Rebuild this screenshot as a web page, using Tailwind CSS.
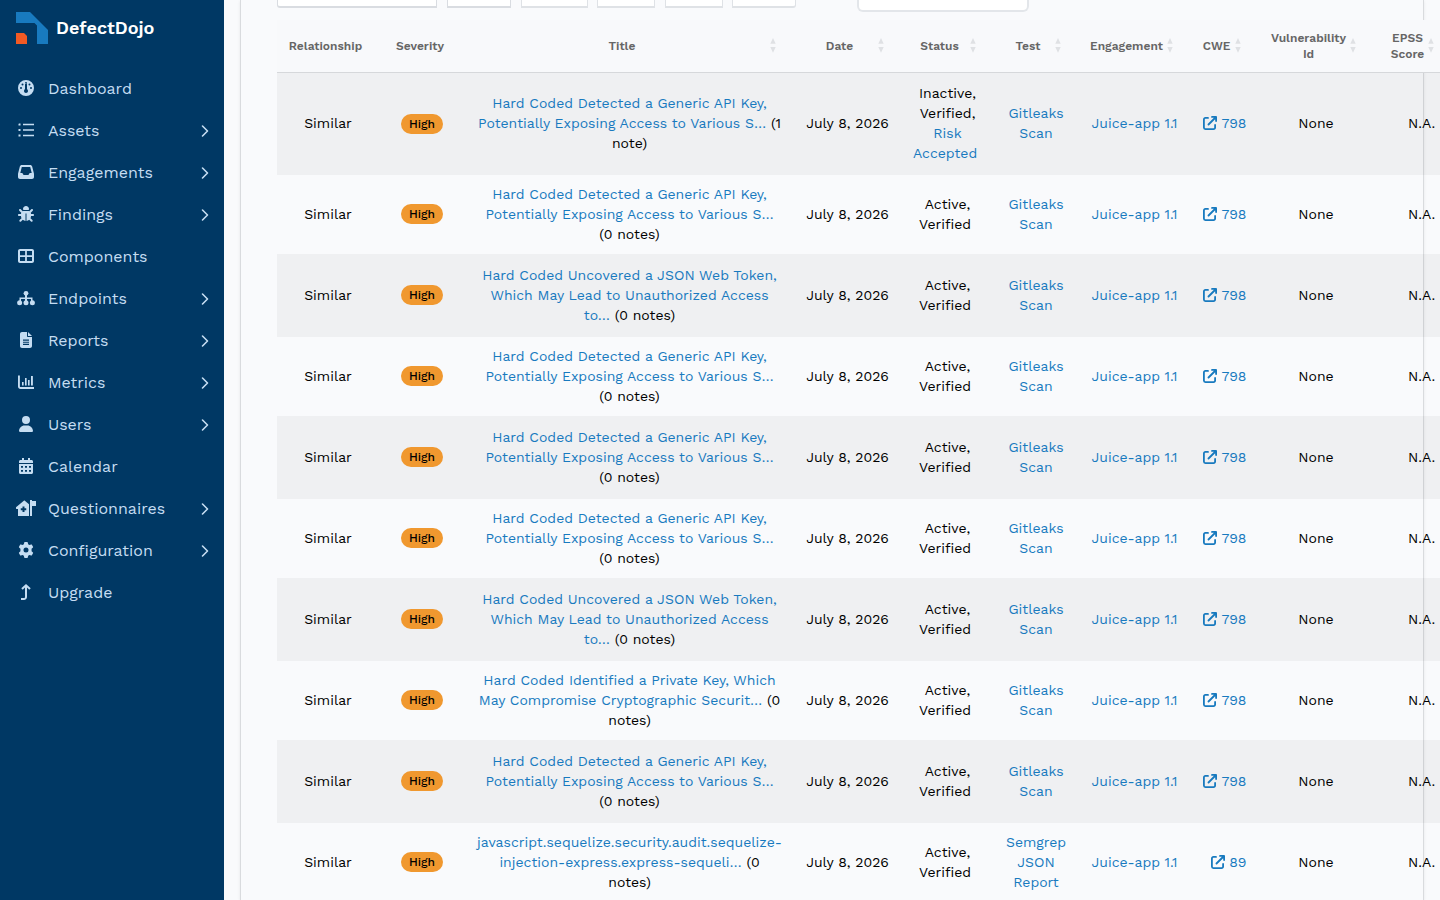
<!DOCTYPE html>
<html lang="en">
<head>
    <meta charset="UTF-8">
    <meta name="viewport" content="width=device-width, initial-scale=1.0">
    <title>DefectDojo</title>
    <script src="https://cdn.jsdelivr.net/npm/@tailwindcss/browser@4"></script>
</head>
<body class="bg-[#f9fafc] h-screen overflow-hidden flex font-['Work_Sans','Inter',sans-serif]">

    <!-- Sidebar -->
    <aside class="w-56 shrink-0 h-full bg-[#003864]">
        <div class="h-[67px] pl-4 pt-3 flex gap-2">
            <svg class="w-8 h-8" viewBox="0 0 32 32">
                <path fill="#187abf" d="M0 0h14l18 18v14H21V13.500L18.500 11H0z"/>
                <path fill="#f15a24" d="M0 21h8l3 3v8H0z"/>
            </svg>
            <span class="text-white text-[18px] font-semibold leading-8">DefectDojo</span>
        </div>
        <nav id="menu"></nav>
    </aside>

    <!-- Content -->
    <main class="flex-1 min-w-0 pl-4 pr-4">
        <div class="h-full border-x border-[#d9dbde] shadow-[0_1px_3px_rgba(0,0,0,0.08)] pl-9 flex flex-col">
            <div class="h-5 shrink-0 flex items-start">
                <div class="w-40 h-2 rounded-bl-[3px] bg-white border-x border-b-2 border-[#d9dce1]"></div>
                <div class="ml-2.5 w-16 h-2 bg-white border-x border-b-2 border-[#d9dce1]"></div>
                <div class="ml-2.5 w-[67px] h-2 bg-white border-x border-b-2 border-[#dfe2e6]"></div>
                <div class="ml-[9px] w-[58px] h-2 bg-white border-x border-b-2 border-[#dfe2e6]"></div>
                <div class="ml-2.5 w-[58px] h-2 bg-white border-x border-b-2 border-[#dfe2e6]"></div>
                <div class="ml-[9px] w-16 h-2 rounded-br-[3px] bg-white border-x border-b-2 border-[#dfe2e6]"></div>
                <div class="ml-[61px] w-[172px] h-3 rounded-b-md bg-white border-x-2 border-b-2 border-[#e3e6ea]"></div>
            </div>
            <table class="w-[1193px] table-fixed border-separate border-spacing-0 text-center text-[14px] leading-5 text-black">
                <colgroup>
                    <col class="w-[101px]"><col class="w-[88px]"><col class="w-[327px]"><col class="w-[108px]"><col class="w-[92px]">
                    <col class="w-[85px]"><col class="w-[112px]"><col class="w-[68px]"><col class="w-[115px]"><col class="w-[97px]">
                </colgroup>
                <thead>
                    <tr id="head" class="h-[53px] text-[12px] leading-4 text-[#666] bg-[#f8f9fb]"></tr>
                </thead>
                <tbody id="rows"></tbody>
            </table>
        </div>
    </main>

<script>
    const menu = [
        ['Dashboard', 0, '0 0 512 512', '<path fill-rule="evenodd" d="M0 256a256 256 0 1 1 512 0A256 256 0 1 1 0 256zM288 96a32 32 0 1 0-64 0 32 32 0 1 0 64 0zM256 416c35.300 0 64-28.700 64-64 0-17.400-6.900-33.100-18.100-44.600-3.100-3.200-13.900-18-13.900-28V144a32 32 0 1 0-64 0v135c0 10-10.800 25-13.900 28-11.200 12-18.100 27-18.100 45 0 35.300 28.700 64 64 64zM176 144a32 32 0 1 0-64 0 32 32 0 1 0 64 0zM96 288a32 32 0 1 0 0-64 32 32 0 1 0 0 64zm352-32a32 32 0 1 0-64 0 32 32 0 1 0 64 0zM368 176a32 32 0 1 0 0-64 32 32 0 1 0 0 64z"/>'],
        ['Assets', 1, '0 0 512 512', '<path d="M32 48h48v64H16V64zM16 224h64v64H16zM16 400h64v64H16zM160 56h352v48H160zM160 232h352v48H160zM160 408h352v48H160z"/>'],
        ['Engagements', 1, '0 0 512 512', '<path fill-rule="evenodd" d="M121 32C92 32 66 52 59 80L2 306c-1 5-2 10-2 15v95c0 35 29 64 64 64h384c35 0 64-29 64-64v-95c0-5-1-10-2-15L453 80c-7-28-33-48-62-48zm0 64h270l48 192h-51c-12 0-23 7-29 18l-14 28c-6 11-17 18-29 18H196c-12 0-23-7-29-18l-14-28c-6-11-17-18-29-18H73z"/>'],
        ['Findings', 1, '0 0 512 512', '<path d="M256 0c53 0 96 43 96 96v4c0 15-13 28-28 28H188c-15 0-28-13-28-28v-4c0-53 43-96 96-96zM41 105c13-13 33-13 46 0l64 64c11-6 23-9 35-9h140c12 0 24 3 35 9l64-64c13-13 33-13 46 0s13 33 0 46l-64 64c6 12 9 25 10 41h63c18 0 32 14 32 32s-14 32-32 32h-64c0 25-6 48-16 69l61 62c13 13 13 33 0 46s-33 13-46 0l-56-56c-24 21-54 35-87 39V240h-32v240c-33-4-63-18-87-39l-56 56c-13 13-33 13-46 0s-13-33 0-46l62-62c-11-21-17-44-17-69H32c-18 0-32-14-32-32s14-32 32-32h64c0-16 4-29 9-41l-64-64c-13-13-13-33 0-46z"/>'],
        ['Components', 0, '0 0 512 512', '<path fill-rule="evenodd" d="M64 32C29 32 0 61 0 96v320c0 35 29 64 64 64h384c35 0 64-29 64-64V96c0-35-29-64-64-64zM64 96h164v132H64zM284 96h164v132H284zM64 284h164v132H64zM284 284h164v132H284z"/>'],
        ['Endpoints', 1, '0 0 576 512', '<path d="M256 150h64v90h176v110h-48v-62H320v70h-64v-70H128v62H80V240h176z"/><circle cx="288" cy="104" r="76"/><circle cx="84" cy="408" r="80"/><circle cx="288" cy="408" r="80"/><circle cx="492" cy="408" r="80"/>'],
        ['Reports', 1, '0 0 384 512', '<path fill-rule="evenodd" d="M64 0C29 0 0 29 0 64v384c0 35 29 64 64 64h256c35 0 64-29 64-64V160H256c-18 0-32-14-32-32V0zM256 0v128h128zM96 240h192v36H96zM96 308h192v36H96zM96 376h192v36H96z"/>'],
        ['Metrics', 1, '0 0 512 512', '<path d="M0 48h60v340c0 18 8 30 30 30h422v60H80c-44 0-80-36-80-80zM128 256h52v112h-52zM224 128h52v240h-52zM320 192h52v176h-52zM416 64h60v304h-60z"/>'],
        ['Users', 1, '0 0 448 512', '<path d="M224 256a128 128 0 1 0 0-256 128 128 0 1 0 0 256zM178 304C80 304 0 384 0 482c0 16 14 30 30 30h388c16 0 30-14 30-30 0-98-80-178-178-178z"/>'],
        ['Calendar', 0, '0 0 448 512', '<path fill-rule="evenodd" d="M96 0h64v64h128V0h64v64h48c26 0 48 22 48 48v48H0v-48c0-26 22-48 48-48h48zM0 192h448v272c0 26-22 48-48 48H48c-26 0-48-22-48-48zM64 256v56h64v-56zM192 256v56h64v-56zM320 256v56h64v-56zM64 384v56h64v-56zM192 384v56h64v-56zM320 384v56h64v-56z"/>'],
        ['Questionnaires', 1, '0 0 640 512', '<path fill-rule="evenodd" d="M0 230L250 20c10-8 22-8 32 0l134 112v380H64V288H24c-26 0-34-40-24-58zM208 208v56h-56v64h56v56h64v-56h56v-64h-56v-56zM448 0h64v32h128v160H512v320h-64z"/>'],
        ['Configuration', 1, '0 0 512 512', '<path fill-rule="evenodd" d="M200 14l12-14h88l12 14 14 60 36 21 59-18 19 5 44 76-6 18-44 42v76l44 42 6 18-44 76-19 5-59-18-36 21-14 60-12 14h-88l-12-14-14-60-36-21-59 18-19-5-44-76 6-18 44-42v-76l-44-42-6-18 44-76 19-5 59 18 36-21zM256 336a80 80 0 1 0 0-160 80 80 0 1 0 0 160z"/>'],
        ['Upgrade', 0, '0 0 384 512', '<path d="M32 448h96c18 0 32-14 32-32V109l-73 74-46-46L192 0l151 137-46 46-73-74v307c0 53-43 96-96 96H32z"/>'],
    ];

    document.getElementById('menu').innerHTML = menu.map(([name, sub, box, icon]) => `
        <a class="h-[42px] pl-4 pr-[15px] flex items-center text-[#c5ddf2]">
            <span class="w-5 flex justify-center"><svg class="h-4 w-5" fill="#c5ddf2" viewBox="${box}">${icon}</svg></span>
            <span class="ml-3 pt-0.5 flex-1 text-base leading-6">${name}</span>
            ${sub ? '<svg class="w-2.5 h-3.5 mt-px" viewBox="0 0 10 14" fill="none" stroke="#c5ddf2" stroke-width="1.600" stroke-linecap="round" stroke-linejoin="round"><path d="M3.500 2l5 5-5 5"/></svg>' : ''}
        </a>`).join('');

    // label, sortable
    const heads = [['Relationship', 0], ['Severity', 0], ['Title', 1], ['Date', 1], ['Status', 1], ['Test', 1], ['Engagement', 1], ['CWE', 1], ['Vulnerability<br>Id', 1], ['EPSS<br>Score', 1]];
    const sort = at => `<svg class="absolute ${at} top-[18px] w-1.5 h-[15px]" viewBox="0 0 6 15" fill="#dfe1e4"><path d="M3 0l2.700 5.700H.3zM3 14.700L5.700 9H.3z"/></svg>`;
    document.getElementById('head').innerHTML = heads.map(([label, s], i) => {
        const last = i === heads.length - 1;
        return `<th class="relative p-0 border-b border-[#d6d8db] font-semibold whitespace-nowrap ${last ? 'pr-7' : i === 8 ? 'pr-3.5' : s ? 'pr-[15px]' : 'pr-1'}">${label}${s ? sort(last ? 'right-9' : 'right-[17px]') : ''}</th>`;
    }).join('');

    const api = ['Hard Coded Detected a Generic API Key,<br>Potentially Exposing Access to Various S…', '<br>(0 notes)'];
    const jwt = ['Hard Coded Uncovered a JSON Web Token,<br>Which May Lead to Unauthorized Access<br>to…', ' (0 notes)'];
    const key = ['Hard Coded Identified a Private Key, Which<br>May Compromise Cryptographic Securit…', ' (0<br>notes)'];
    const sql = ['javascript.sequelize.security.audit.sequelize-<br>injection-express.express-sequeli…', ' (0<br>notes)'];
    const rows = [[api[0], ' (1<br>note)'], api, jwt, api, api, api, jwt, key, api, sql];

    document.getElementById('rows').innerHTML = rows.map(([title, notes], i) => `
        <tr class="${i === 0 ? 'h-[102px]' : i % 2 ? 'h-[79px]' : 'h-[83px]'} ${i % 2 ? '' : 'bg-black/4'}">
            <td class="p-0 pb-0.5 pl-px">Similar</td>
            <td class="p-0 pb-px"><span class="block w-fit mx-auto h-5 px-2 rounded-full bg-[#f0982f] text-[12px] leading-[21px] font-medium">High</span></td>
            <td class="p-0 pb-0.5 whitespace-nowrap"><a class="text-[#187abf]">${title}</a>${notes}</td>
            <td class="p-0 pb-0.5 pl-px">July 8, 2026</td>
            <td class="p-0 pb-0.5 pl-px">${i ? 'Active,<br>Verified&nbsp;' : 'Inactive,<br>Verified,<br><a class="text-[#187abf]">Risk<br>Accepted&nbsp;</a>'}</td>
            <td class="p-0 pb-0.5 pl-px"><a class="text-[#187abf]">${title === sql[0] ? 'Semgrep<br>JSON<br>Report' : 'Gitleaks<br>Scan'}</a></td>
            <td class="p-0 pb-0.5 pl-px"><a class="text-[#187abf]">Juice-app 1.1</a></td>
            <td class="p-0 pb-0.5 pr-[11.500px]"><a class="flex justify-end items-center gap-1 text-[#187abf]"><svg class="w-3.5 h-3.5" viewBox="0 0 14 14" fill="none" stroke="#187abf" stroke-width="1.800" stroke-linecap="round" stroke-linejoin="round"><path d="M5 1.900H2.400A1.500 1.500 0 0 0 .9 3.400v8.200a1.500 1.500 0 0 0 1.500 1.500h8.200a1.500 1.500 0 0 0 1.500-1.500V9M9 .9h4.100V5M13 1L5.500 8.500"/></svg>${title === sql[0] ? '89' : '798'}</a></td>
            <td class="p-0 pb-0.5 pl-px">None</td>
            <td class="p-0 pb-0.5">N.A.</td>
        </tr>`).join('');
</script>

</body>
</html>
